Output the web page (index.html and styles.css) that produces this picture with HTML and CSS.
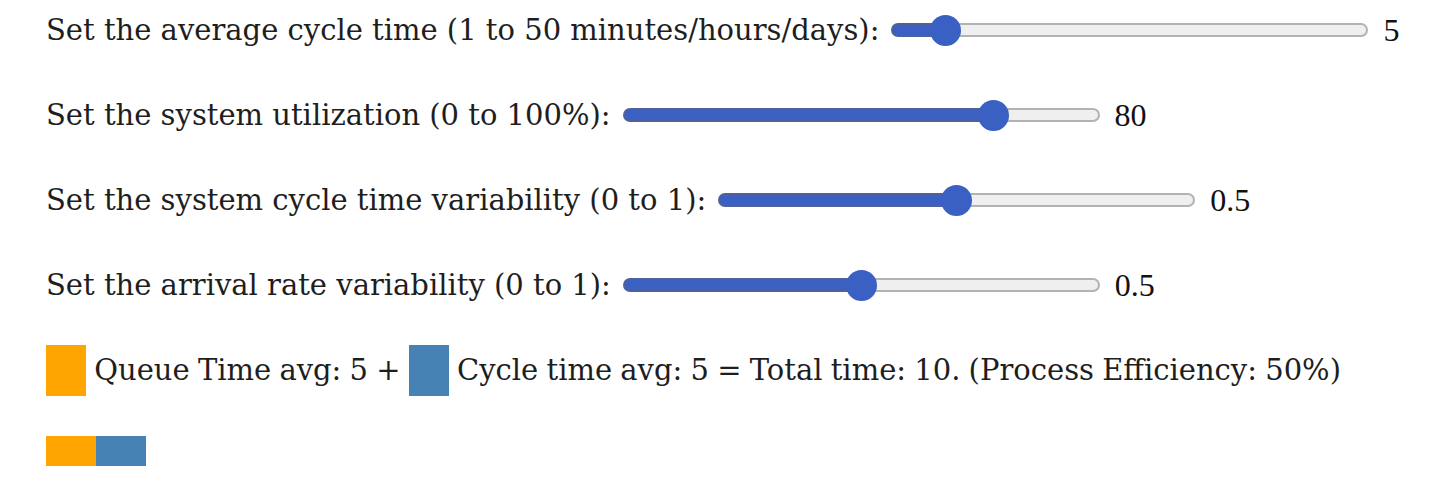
FILE: index.html
```html
<!DOCTYPE html>
<html lang="en">
<head>
<meta charset="utf-8">
<title>Cycle time</title>
<link rel="stylesheet" href="styles.css">
</head>
<body>
<main class="page">
  <div class="row">
    <label class="label" for="s1">Set the average cycle time (1 to 50 minutes/hours/days):</label>
    <input id="s1" class="slider" type="range" min="1" max="50" value="5" style="--f:0.0816">
    <span class="value">5</span>
  </div>
  <div class="row">
    <label class="label" for="s2">Set the system utilization (0 to 100%):</label>
    <input id="s2" class="slider" type="range" min="0" max="100" value="80" style="--f:0.8">
    <span class="value">80</span>
  </div>
  <div class="row">
    <label class="label" for="s3">Set the system cycle time variability (0 to 1):</label>
    <input id="s3" class="slider" type="range" min="0" max="1" step="0.1" value="0.5" style="--f:0.5">
    <span class="value">0.5</span>
  </div>
  <div class="row">
    <label class="label" for="s4">Set the arrival rate variability (0 to 1):</label>
    <input id="s4" class="slider" type="range" min="0" max="1" step="0.1" value="0.5" style="--f:0.5">
    <span class="value">0.5</span>
  </div>
  <p class="result"><span class="swatch queue"></span> Queue Time avg: 5 + <span class="swatch cycle"></span> Cycle time avg: 5 = Total time: 10. (Process Efficiency: 50%)</p>
  <div class="bar">
    <span class="seg queue" style="width:50px"></span><span class="seg cycle" style="width:50px"></span>
  </div>
</main>
</body>
</html>
```
FILE: styles.css
```css
html, body {
  margin: 0;
  padding: 0;
  background: #ffffff;
}

.page {
  padding: 0 0 0 46px;
  font-family: "DejaVu Serif", "Liberation Serif", serif;
  font-size: 29px;
  color: #1e1e1e;
}

.row {
  display: flex;
  align-items: center;
  height: 60px;
  margin-bottom: 25px;
}

.label {
  white-space: nowrap;
  margin-right: 12px;
}

.value {
  font-family: "Liberation Serif", serif;
  font-size: 32px;
  color: #111111;
  margin-left: 15px;
}

.slider {
  -webkit-appearance: none;
  appearance: none;
  width: 477px;
  height: 32px;
  margin: 0;
  padding: 0;
  background: transparent;
  flex: none;
}

.slider::-webkit-slider-runnable-track {
  box-sizing: border-box;
  height: 14px;
  border-radius: 7px;
  border: 2px solid transparent;
  background:
    linear-gradient(to right, #3b60c4 calc(13.5px + var(--f) * 446px), #efefef 0) padding-box,
    linear-gradient(to right, #4f6197 calc(15.5px + var(--f) * 446px), #b3b3b3 0) border-box;
}

.slider::-webkit-slider-thumb {
  -webkit-appearance: none;
  appearance: none;
  width: 31px;
  height: 31px;
  border-radius: 50%;
  background: #3b60c4;
  border: none;
  margin-top: -10.5px;
}

.result {
  margin: 0;
  height: 60px;
  display: flex;
  align-items: center;
  white-space: pre;
  word-spacing: -1px;
}

.swatch {
  display: inline-block;
  width: 40px;
  height: 51px;
}

.queue {
  background: #ffa500;
}

.cycle {
  background: #4682b4;
}

.bar {
  display: flex;
  margin-top: 36px;
  height: 30px;
}

.seg {
  display: block;
  height: 30px;
}
```
